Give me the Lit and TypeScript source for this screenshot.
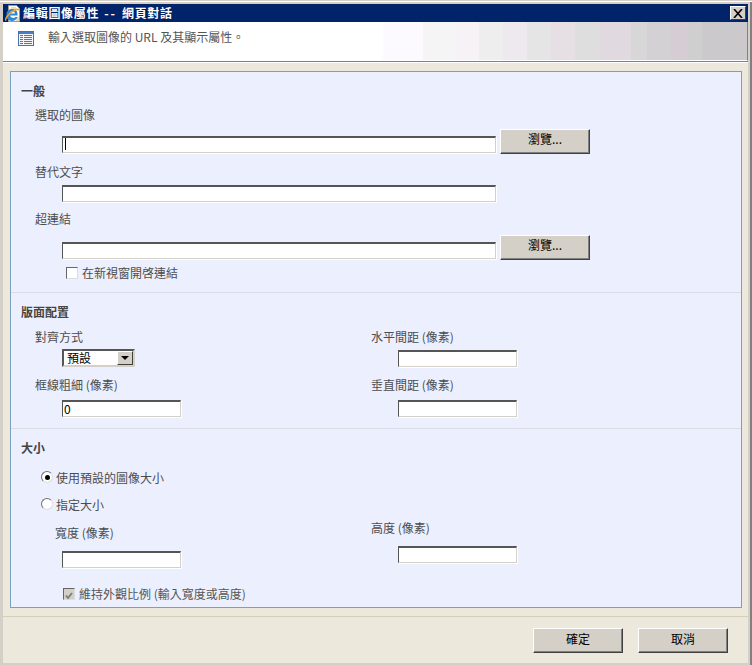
import { LitElement, html, css, svg } from "lit";
import { customElement } from "lit/decorators.js";

const ieIcon = svg`<svg class="ie" width="16" height="17" viewBox="0 0 16 17">
  <path d="M3.500.5h8l3 3v13h-11z" fill="#fdfdf6" stroke="#a89a6c"/>
  <path d="M6 3h5M6 5h7M10 13h4M11 15h3" stroke="#c9bd8f"/>
  <path d="M1.500 9.500a5.500 5 0 0 1 11-1v2H5.200a3 2.500 0 0 0 5.300 1.500h2a5.500 5 0 0 1-11-2.500z" fill="#2f86d8"/>
  <path d="M5.200 8.500h4.800a2.400 2.200 0 0 0-4.800 0z" fill="#fdfdf6"/>
  <path d="M1 15.500c-1.500-1.600 3-8 10-11 1.800-.8 3-.3 3 1" fill="none" stroke="#f0a820" stroke-width="1.400"/>
</svg>`;

const tableIcon = svg`<svg class="tbl" width="16" height="15" viewBox="0 0 16 15">
  <rect x=".5" y=".5" width="15" height="14" fill="#f4f6fa" stroke="#4f70a6"/>
  <rect x="1" y="1" width="14" height="2" fill="#4a7cc8"/>
  <path d="M2 4.500h3M6 4.500h8M2 6.500h3M6 6.500h8M2 8.500h3M6 8.500h8M2 10.500h3M6 10.500h8M2 12.500h3M6 12.500h8" stroke="#64748c"/>
</svg>`;

@customElement("app-root")
export class AppRoot extends LitElement {
  static styles = css`
    :host {
      display: flex;
      flex-direction: column;
      box-sizing: border-box;
      width: 752px;
      height: 665px;
      overflow: hidden;
      background: #d4d0c8;
      padding: 4px 4px 2px 3px;
      font: 12px/14px "Noto Sans CJK TC", "Liberation Sans", sans-serif;
      color: #4c4c4c;
      box-shadow: inset 0 1px 0 #d4d0c8, inset 0 2px 0 #fff, inset -2px 0 0 #808080;
    }
    * { box-sizing: border-box; }
    .titlebar {
      flex: none;
      height: 18px;
      background: #002369;
      display: flex;
      align-items: center;
      padding: 0 2px;
      gap: 2px;
      color: #fff;
      font-weight: 700;
    }
    .ie { flex: none; margin-left: 0; }
    .title { flex: 1; font-size: 12px; word-spacing: 1.500px; letter-spacing: .7px; }
    .dash { letter-spacing: 2px; }
    .close {
      width: 16px;
      height: 14px;
      background: #d4d0c8;
      border: 1px solid;
      border-color: #fff #404040 #404040 #fff;
      display: flex;
      align-items: center;
      justify-content: center;
    }
    .desc {
      flex: none;
      height: 39px;
      padding: 8px 0 0 15px;
      display: flex;
      gap: 14px;
      background: linear-gradient(90deg,
        #fff 0, #fff 380px,
        #fdfaff 380px, #fdfaff 420px,
        #f5f5f5 420px, #f5f5f5 452px,
        #f6f2f5 452px, #f6f2f5 476px,
        #eeeeee 476px, #eeeeee 500px,
        #eee9ee 500px, #eee9ee 524px,
        #e5e5e5 524px, #e5e5e5 548px,
        #e6e0e5 548px, #e6e0e5 572px,
        #dedede 572px, #dedede 597px,
        #e0dae0 597px, #e0dae0 628px,
        #d7d7d7 628px, #d7d7d7 644px,
        #d3d1d4 644px, #d3d1d4 668px,
        #d5cdd3 668px, #d5cdd3 684px,
        #cfcfcf 684px, #cfcfcf 699px,
        #cbc9cb 699px);
      border-right: 1px solid #808080;
      border-bottom: 1px solid #fff;
      font-size: 12px;
      color: #555;
    }
    .tbl { margin-top: 1px; flex: none; }
    .body {
      flex: 1;
      background: #ece9dc;
      border-top: 1px solid #808080;
      box-shadow: inset 0 1px 0 #fff;
      padding: 9px 6px 0 7px;
      display: flex;
      flex-direction: column;
    }
    .panel {
      flex: none;
      height: 537px;
      background: #ecf0fe;
      border: 1px solid #7c9ebf;
    }
    section { border-bottom: 1px solid #dcdce6; padding: 0 9px; }
    section:last-child { border-bottom: 0; }
    .s1 { height: 221px; padding-top: 12px; }
    .s2 { height: 136px; padding-top: 12px; }
    .s3 { height: 178px; padding-top: 12px; }
    h2 { margin: 0 0 0 1px; font-size: 12px; line-height: 14px; font-weight: 700; color: #444; }
    .label { margin-left: 15px; height: 14px; white-space: nowrap; }
    .col.right .label { margin-left: 1px; }
    .row { display: flex; align-items: flex-end; margin-left: 42px; gap: 4px; }
    .in {
      display: block;
      height: 17px;
      background: #fff;
      border-style: solid;
      border-color: #555 #d4d0c8 #d4d0c8 #555;
      border-width: 2px 1px 1px 1px;
      box-shadow: 1px 1px 0 #fff;
      font-size: 12px;
      line-height: 13px;
      color: #000;
      padding-left: 1px;
    }
    .row .in { margin-bottom: 1px; }
    .wide { width: 434px; }
    .mid { width: 119px; }
    .caret { display: block; width: 1px; height: 12px; background: #000; margin-left: 1px; }
    .btn {
      width: 90px;
      height: 25px;
      background: #d4d0c8;
      border: 1px solid;
      border-color: #fff #404040 #404040 #fff;
      box-shadow: inset -1px -1px 0 #808080;
      display: flex;
      justify-content: center;
      padding-top: 2px;
      color: #000;
      font-size: 12px;
    }
    .check {
      display: flex;
      align-items: center;
      height: 14px;
    }
    .cb {
      width: 12px;
      height: 12px;
      background: #fff;
      border: 1px solid;
      border-color: #666 #ddd #ddd #666;
      display: block;
      flex: none;
    }
    .cb.dis { background: #d4d0c8; }
    .newwin { margin: 6px 0 0 46px; gap: 4px; }
    .keep { margin: 19px 0 0 43px; gap: 4px; color: #555; }
    .cols { display: grid; grid-template-columns: 350px 1fr; margin-top: 11px; }
    .col .ctl { margin-left: 42px; }
    .col.right .ctl { margin-left: 28px; }
    .select {
      width: 73px;
      height: 18px;
      background: #fff;
      border: 2px solid #555;
      border-right-color: #d4d0c8;
      border-bottom-color: #d4d0c8;
      display: flex;
      justify-content: space-between;
      color: #000;
      padding-left: 3px;
      line-height: 14px;
    }
    .arrow {
      width: 16px;
      height: 14px;
      background: #d4d0c8;
      border: 1px solid;
      border-color: #fff #404040 #404040 #fff;
      display: flex;
      align-items: center;
      justify-content: center;
    }
    .radio { display: flex; align-items: center; gap: 3px; margin-left: 21px; height: 14px; }
    .r {
      width: 12px;
      height: 12px;
      margin-top: -2px;
      border-radius: 50%;
      background: #fff;
      border: 1.500px solid #6f6f6f;
      border-right-color: #ddd;
      border-bottom-color: #ddd;
      display: flex;
      align-items: center;
      justify-content: center;
      flex: none;
    }
    .r i { width: 5px; height: 5px; border-radius: 50%; background: #000; display: block; }
    .footer {
      margin: 8px -6px 0 -7px;
      border-top: 1px solid #d4d0b8;
      display: flex;
      justify-content: flex-end;
      gap: 15px;
      padding: 11px 20px 0 0;
    }
    .footer .btn { padding-top: 3px; }
    .mt-a { margin-top: 10px; }
  `;

  private browseBtn() {
    return html`<div class="btn">瀏覽...</div>`;
  }

  render() {
    return html`
      <div class="titlebar">
        ${ieIcon}
        <div class="title">編輯圖像屬性 <span class="dash">--</span> 網頁對話</div>
        <div class="close">
          <svg width="10" height="9" viewBox="0 0 10 9"><path d="M1 0l8 9M9 0L1 9" stroke="#000" stroke-width="1.600"/></svg>
        </div>
      </div>
      <div class="desc">
        ${tableIcon}
        <span>輸入選取圖像的 URL 及其顯示屬性。</span>
      </div>
      <div class="body">
        <div class="panel">
          <section class="s1">
            <h2>一般</h2>
            <div class="label mt-a">選取的圖像</div>
            <div class="row" style="margin-top:7px">
              <div class="in wide"><span class="caret"></span></div>
              ${this.browseBtn()}
            </div>
            <div class="label" style="margin-top:11px">替代文字</div>
            <div class="row" style="margin-top:6px"><div class="in wide"></div></div>
            <div class="label" style="margin-top:9px">超連結</div>
            <div class="row" style="margin-top:9px">
              <div class="in wide"></div>
              ${this.browseBtn()}
            </div>
            <div class="check newwin"><span class="cb"></span>在新視窗開啓連結</div>
          </section>
          <section class="s2">
            <h2>版面配置</h2>
            <div class="cols">
              <div class="col">
                <div class="label">對齊方式</div>
                <div class="ctl" style="margin-top:5px">
                  <div class="select">預設
                    <span class="arrow"><svg width="8" height="4" viewBox="0 0 8 4"><path d="M0 0h8L4 4z" fill="#000"/></svg></span>
                  </div>
                </div>
              </div>
              <div class="col right">
                <div class="label">水平間距 (像素)</div>
                <div class="ctl" style="margin-top:6px"><div class="in mid"></div></div>
              </div>
            </div>
            <div class="cols" style="margin-top:11px">
              <div class="col">
                <div class="label">框線粗細 (像素)</div>
                <div class="ctl" style="margin-top:8px"><div class="in mid">0</div></div>
              </div>
              <div class="col right">
                <div class="label">垂直間距 (像素)</div>
                <div class="ctl" style="margin-top:8px"><div class="in mid"></div></div>
              </div>
            </div>
          </section>
          <section class="s3">
            <h2>大小</h2>
            <div class="radio" style="margin-top:16px"><span class="r"><i></i></span>使用預設的圖像大小</div>
            <div class="radio" style="margin-top:13px"><span class="r"></span>指定大小</div>
            <div class="cols" style="margin-top:14px">
              <div class="col">
                <div class="label" style="margin-left:35px">寬度 (像素)</div>
                <div class="ctl" style="margin-top:11px"><div class="in mid"></div></div>
              </div>
              <div class="col right" style="margin-top:-5px">
                <div class="label">高度 (像素)</div>
                <div class="ctl" style="margin-top:11px"><div class="in mid"></div></div>
              </div>
            </div>
            <div class="check keep">
              <span class="cb dis"><svg width="10" height="10" viewBox="0 0 10 10"><path d="M2 4.500l2 2.500 4-5" fill="none" stroke="#808080" stroke-width="2"/></svg></span>
              維持外觀比例 (輸入寬度或高度)
            </div>
          </section>
        </div>
        <div class="footer">
          <div class="btn">確定</div>
          <div class="btn">取消</div>
        </div>
      </div>
    `;
  }
}
